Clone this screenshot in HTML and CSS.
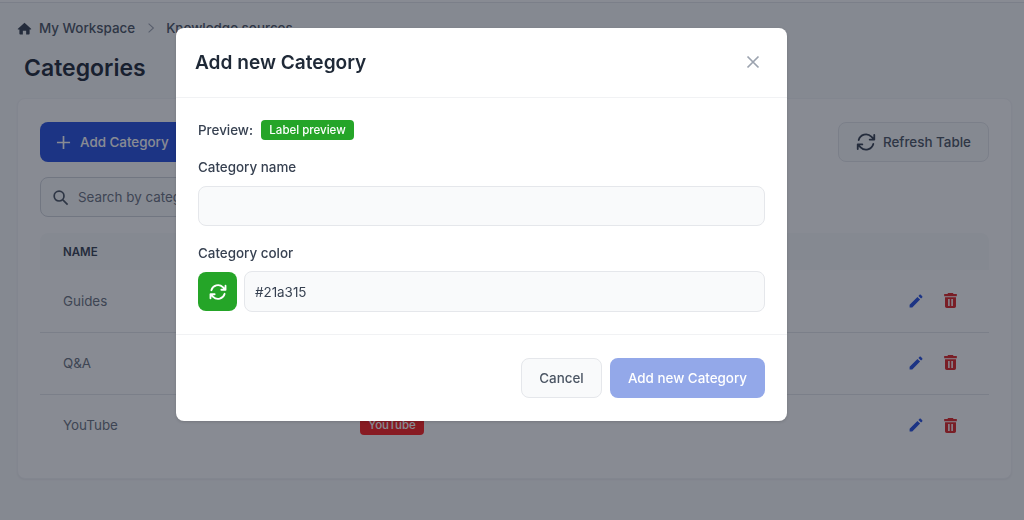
FILE: index.html
```html
<!DOCTYPE html>
<html lang="en">
<head>
<meta charset="utf-8">
<title>Categories</title>
<link rel="stylesheet" href="styles.css">
</head>
<body>
<div class="page">
  <div class="topline"></div>
  <nav class="crumbs">
    <svg class="home" viewBox="0 0 20 20"><path d="M10 2.200 1.200 10.400c-.4.4-.1 1 .4 1H3.200v5.600c0 .6.4 1 1 1h3.600v-5h4.400v5h3.600c.6 0 1-.4 1-1v-5.600h1.600c.5 0 .8-.6.4-1L10 2.200Z"/></svg>
    <span>My Workspace</span>
    <svg class="chev" viewBox="0 0 10 14"><path d="M2 1.500 8 7l-6 5.500"/></svg>
    <span>Knowledge sources</span>
  </nav>
  <h1 class="title">Categories</h1>
  <section class="card">
    <div class="toolbar">
      <button class="btn primary">
        <svg class="ic16" viewBox="0 0 16 16"><path d="M8 1v14M1 8h14"/></svg>
        Add Category
      </button>
      <button class="btn ghost">
        <svg class="ic20" viewBox="0 0 24 24"><path d="M16.023 9.348h4.992M2.985 19.644v-4.992m0 0h4.992m-4.993 0 3.181 3.183a8.250 8.250 0 0 0 13.803-3.700M4.031 9.865a8.250 8.250 0 0 1 13.803-3.700l3.181 3.182m0-4.991v4.990"/></svg>
        Refresh Table
      </button>
    </div>
    <div class="search">
      <svg class="ic18" viewBox="0 0 18 18"><circle cx="7.500" cy="7.500" r="5.200"/><path d="m11.500 11.500 5 5"/></svg>
      <span>Search by category</span>
    </div>
    <div class="thead"><span>NAME</span></div>
    <div class="row">
      <span class="name">Guides</span><span class="cell"><span class="tag tag-blue">Guides</span></span>
      <span class="actions">
        <svg class="edit" viewBox="0 0 18 18"><path d="M1.800 16.200v-3L10.600 4.400l3 3-8.800 8.800h-3ZM11.700 3.300l1.300-1.300c.4-.4 1-.4 1.400 0l1.600 1.600c.4.400.4 1 0 1.400l-1.300 1.300-3-3Z"/></svg>
        <svg class="trash" viewBox="0 0 18 18"><path d="M6.500 1h5l.8 1.200h3.400v2.300H2.300V2.200h3.400L6.500 1ZM3.200 5.500h11.600V15.200c0 1-.8 1.800-1.800 1.800H5c-1 0-1.800-.8-1.800-1.800V5.500Zm3.300 2v7.200h1.600V7.500H6.500Zm3.400 0v7.200h1.600V7.500H9.900Z" fill-rule="evenodd"/></svg>
      </span>
    </div>
    <div class="row">
      <span class="name">Q&amp;A</span><span class="cell"><span class="tag tag-blue">Q&amp;A</span></span>
      <span class="actions">
        <svg class="edit" viewBox="0 0 18 18"><path d="M1.800 16.200v-3L10.600 4.400l3 3-8.800 8.800h-3ZM11.700 3.300l1.300-1.300c.4-.4 1-.4 1.400 0l1.600 1.600c.4.400.4 1 0 1.400l-1.300 1.300-3-3Z"/></svg>
        <svg class="trash" viewBox="0 0 18 18"><path d="M6.500 1h5l.8 1.200h3.400v2.300H2.300V2.200h3.400L6.500 1ZM3.200 5.500h11.600V15.200c0 1-.8 1.800-1.800 1.800H5c-1 0-1.800-.8-1.800-1.800V5.500Zm3.300 2v7.200h1.600V7.500H6.500Zm3.400 0v7.200h1.600V7.500H9.900Z" fill-rule="evenodd"/></svg>
      </span>
    </div>
    <div class="row last">
      <span class="name">YouTube</span><span class="cell"><span class="tag tag-red">YouTube</span></span>
      <span class="actions">
        <svg class="edit" viewBox="0 0 18 18"><path d="M1.800 16.200v-3L10.600 4.400l3 3-8.800 8.800h-3ZM11.700 3.300l1.300-1.300c.4-.4 1-.4 1.400 0l1.600 1.600c.4.400.4 1 0 1.400l-1.300 1.300-3-3Z"/></svg>
        <svg class="trash" viewBox="0 0 18 18"><path d="M6.500 1h5l.8 1.200h3.400v2.300H2.300V2.200h3.400L6.500 1ZM3.200 5.500h11.600V15.200c0 1-.8 1.800-1.800 1.800H5c-1 0-1.800-.8-1.800-1.800V5.500Zm3.300 2v7.200h1.600V7.500H6.500Zm3.400 0v7.200h1.600V7.500H9.900Z" fill-rule="evenodd"/></svg>
      </span>
    </div>
  </section>
</div>
<div class="overlay">
  <div class="modal">
    <header class="modal-head">
      <h2>Add new Category</h2>
      <svg class="close" viewBox="0 0 14 14"><path d="m1.500 1.500 11 11M12.500 1.500l-11 11"/></svg>
    </header>
    <div class="modal-body">
      <div class="preview"><span class="label">Preview:</span><span class="tag tag-green">Label preview</span></div>
      <div class="label field-label">Category name</div>
      <div class="input input-name"></div>
      <div class="label field-label second">Category color</div>
      <div class="color-row">
        <span class="swatch">
          <svg viewBox="0 0 24 24"><path d="M16.023 9.348h4.992M2.985 19.644v-4.992m0 0h4.992m-4.993 0 3.181 3.183a8.250 8.250 0 0 0 13.803-3.700M4.031 9.865a8.250 8.250 0 0 1 13.803-3.700l3.181 3.182m0-4.991v4.990"/></svg>
        </span>
        <div class="input input-color">#21a315</div>
      </div>
    </div>
    <footer class="modal-foot">
      <button class="btn cancel">Cancel</button>
      <button class="btn submit">Add new Category</button>
    </footer>
  </div>
</div>
</body>
</html>
```
FILE: styles.css
```css
* { box-sizing: border-box; }
html, body { margin: 0; height: 100%; }
body {
  background: #f9fafb;
  font-family: Inter, "Noto Sans", sans-serif;
  font-size: 13.4px;
  color: #111827;
  overflow: hidden;
}
.page { height: 520px; padding: 0 35px 0 17px; }
.topline { height: 3px; margin: 0 -35px 0 -17px; border-bottom: 1px solid #e5e7eb; background: #fff; }
.crumbs {
  display: flex; align-items: center; height: 20px; margin-top: 15px;
  font-weight: 500; color: #4b5563;
}
.crumbs .home { width: 15px; height: 15px; fill: #374151; margin-right: 7px; flex: none; }
.crumbs .chev { width: 8px; height: 12px; margin: 0 11px 0 12px; fill: none; stroke: #9ca3af; stroke-width: 1.300; }
.title {
  margin: 14px 0 0 7px; font-size: 23px; line-height: 32px; font-weight: 600; color: #1f2937;
}
.card {
  margin-top: 14px; width: 995px; height: 381px; padding: 23px 22px 0;
  background: #fff; border: 1px solid #f3f4f6; border-radius: 8px;
  box-shadow: 0 1px 2px rgba(0,0,0,.05);
}
.toolbar { display: flex; justify-content: space-between; }
.btn {
  display: inline-flex; align-items: center; justify-content: center; gap: 10px;
  height: 40px; border-radius: 8px; font: 500 13.4px Inter, sans-serif; border: 1px solid transparent; padding: 0;
}
.btn.primary { width: 145px; padding-left: 15px; gap: 9px; justify-content: flex-start; background: #2750e1; color: #fff; }
.btn.primary .ic16 { width: 15px; height: 15px; fill: none; stroke: #fff; stroke-width: 1.800; }
.btn.ghost { width: 151px; padding-left: 16px; gap: 6px; justify-content: flex-start; background: #f9fafb; border-color: #e5e7eb; color: #4b5563; }
.ic20 { width: 22px; height: 22px; fill: none; stroke: #374151; stroke-width: 2; stroke-linecap: round; stroke-linejoin: round; }
.search {
  display: flex; align-items: center; gap: 9px; margin-top: 15px; width: 300px; height: 40px; padding-left: 11px;
  background: #f9fafb; border: 1px solid #d1d5db; border-radius: 8px; color: #6b7280;
}
.ic18 { width: 17px; height: 17px; fill: none; stroke: #4b5563; stroke-width: 1.800; }
.thead {
  display: flex; align-items: center; margin-top: 16px; height: 37px; padding-left: 23px;
  background: #f9fafb; border-radius: 8px 8px 0 0;
  font-size: 11.5px; font-weight: 600; color: #374151;
}
.row {
  display: flex; align-items: center; height: 62px; padding: 0 0 2px 23px;
  border-bottom: 1px solid #e5e7eb; color: #6b7280;
}
.thead + .row { height: 63px; padding-bottom: 1px; }
.row.last { border-bottom: 0; }
.name { width: 297px; flex: none; }
.cell { flex: 1; }
.tag {
  display: inline-flex; align-items: center; justify-content: center; height: 20px; padding: 0 8px;
  border-radius: 4px; font-size: 11.5px; font-weight: 500; color: #fff;
}
.tag-blue { background: #2750e1; }
.tag-red { background: #ff1f1f; width: 64px; }
.tag-green { background: #25a528; width: 93px; padding: 0; }
.actions { display: flex; align-items: center; gap: 18px; padding-right: 30px; }
.edit { width: 16px; height: 16px; fill: #2750e1; }
.trash { width: 17px; height: 17px; fill: #e02424; }

.overlay {
  position: fixed; inset: 0; display: flex; align-items: flex-start; padding: 28px 0 0 176px;
  background: rgba(17,24,39,.5);
}
.modal {
  width: 611px; height: 393px; display: flex; flex-direction: column;
  background: #fff; border-radius: 8px;
  box-shadow: 0 1px 3px rgba(0,0,0,.15);
}
.modal-head {
  flex: none; height: 70px; padding: 0 27px 2px 19px; display: flex; align-items: center; justify-content: space-between;
  border-bottom: 1px solid #f1f2f4;
}
.modal-head h2 { margin: 0; font-size: 19.1px; line-height: 28px; font-weight: 600; color: #1f2937; }
.close { width: 14px; height: 14px; fill: none; stroke: #9ca3af; stroke-width: 1.700; }
.modal-body { flex: 1; padding: 22px 22px 0; border-bottom: 1px solid #f1f2f4; }
.preview { display: flex; align-items: center; gap: 8px; height: 20px; }
.label { font-weight: 500; color: #374151; line-height: 20px; }
.field-label { margin-top: 17px; }
.field-label.second { margin-top: 17px; }
.input {
  height: 41px; background: #f9fafb; border: 1px solid #e5e7eb; border-radius: 8px;
  display: flex; align-items: center; padding: 0 10px; color: #374151;
}
.input-name { margin-top: 9px; height: 40px; }
.color-row { display: flex; gap: 7px; margin-top: 8px; align-items: center; }
.swatch {
  width: 39px; height: 39px; flex: none; border-radius: 8px; background: #25a528;
  display: flex; align-items: center; justify-content: center;
}
.swatch svg { width: 20px; height: 20px; fill: none; stroke: #fff; stroke-width: 2.200; stroke-linecap: round; stroke-linejoin: round; }
.input-color { flex: 1; }
.modal-foot {
  flex: none; height: 86px; display: flex; justify-content: flex-end; gap: 8px; padding: 23px 22px 0 0;
}
.btn.cancel { width: 81px; background: #f9fafb; border-color: #e5e7eb; color: #4b5563; }
.btn.submit { width: 155px; background: #93a8e9; color: #fff; }
```
